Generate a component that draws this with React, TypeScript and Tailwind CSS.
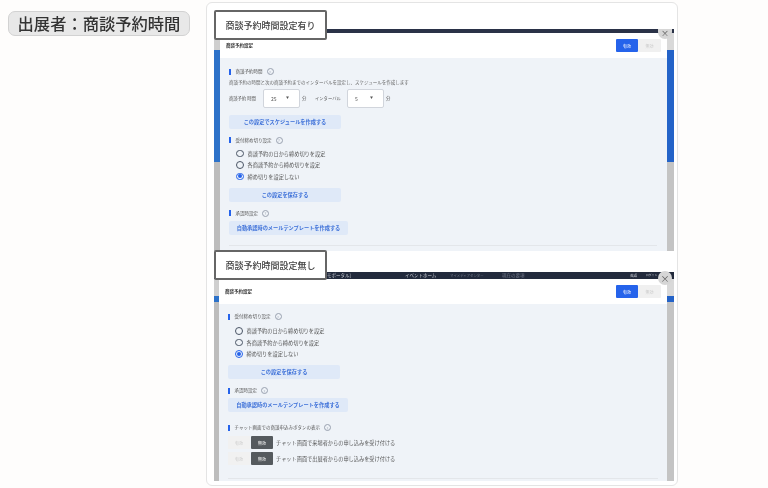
const jp = { fontFamily: '"Noto Sans CJK JP", "Noto Sans", sans-serif' };

function Help() {
  return (
    <span className="ml-[4px] flex h-[7px] w-[7px] items-center justify-center rounded-full border-[0.7px] border-gray-400 text-[4px] leading-none text-gray-400">?</span>
  );
}

function Section({ title, mt = '' }: { title: string; mt?: string }) {
  return (
    <div className={`flex h-[7px] items-center ${mt}`}>
      <span className="h-[6px] w-[1.5px] bg-[#2563eb]" />
      <span className="ml-[5px] text-[4.5px] leading-none text-[#555]">{title}</span>
      <Help />
    </div>
  );
}

function Radio({ label, on = false }: { label: string; on?: boolean }) {
  return (
    <div className="flex h-[11.5px] items-center pl-[7px]">
      <span className={`flex h-[7.5px] w-[7.5px] items-center justify-center rounded-full border-[0.8px] ${on ? 'border-[#2563eb]' : 'border-gray-600'}`}>
        {on && <span className="h-[4px] w-[4px] rounded-full bg-[#2563eb]" />}
      </span>
      <span className="ml-[4px] text-[5.2px] leading-none text-[#555]">{label}</span>
    </div>
  );
}

function SoftButton({ label, width, mt }: { label: string; width: string; mt: string }) {
  return (
    <div className={`flex h-[13.5px] items-center justify-center rounded-[2px] bg-[#dfe9f8] text-[5.2px] font-bold leading-none text-[#3b6fd8] ${width} ${mt}`}>
      {label}
    </div>
  );
}

function Select({ value }: { value: string }) {
  return (
    <div className="flex h-[19px] w-[37px] items-center justify-between rounded-[2px] border-[0.7px] border-gray-300 bg-white pl-[7px] pr-[10px] text-[5px] leading-none text-[#555]">
      <span>{value}</span>
      <span className="text-[3px]">▼</span>
    </div>
  );
}

function ModalHeader() {
  return (
    <div className="flex h-[25px] items-center justify-between bg-white px-[6px] shadow-[0_0.5px_1px_rgba(0,0,0,0.08)]">
      <span className="text-[4.5px] font-bold leading-none text-[#333]">商談予約設定</span>
      <div className="flex h-[13px]">
        <span className="flex w-[22px] items-center justify-center rounded-[1px] bg-[#2563eb] text-[4px] leading-none text-white">有効</span>
        <span className="flex w-[23px] items-center justify-center rounded-[1px] bg-[#f0f0f0] text-[4px] leading-none text-[#ccc]">無効</span>
      </div>
    </div>
  );
}

function ChatRow({ label, mt }: { label: string; mt: string }) {
  return (
    <div className={`flex h-[13px] items-center ${mt}`}>
      <span className="flex h-full w-[22px] items-center justify-center bg-[#f1f1f1] text-[4px] text-[#ccc]">有効</span>
      <span className="ml-px flex h-full w-[22px] items-center justify-center rounded-[1px] bg-[#555a5e] text-[4px] text-white">無効</span>
      <span className="ml-[3px] text-[5.2px] leading-none text-[#555]">{label}</span>
    </div>
  );
}

function Label({ text, top }: { text: string; top: string }) {
  return (
    <div className={`absolute left-[7px] flex h-[30px] w-[113px] items-center justify-center rounded-[2px] border-[2px] border-[#666] bg-white text-[9px] font-medium leading-none text-[#444] ${top}`}>
      {text}
    </div>
  );
}

function WithSettings() {
  return (
    <div className="flex h-[222px] flex-col">
      <div className="h-[4px] bg-[#2a3247]" />
      <div className="relative flex min-h-0 flex-1">
        <div className="flex w-[6px] flex-col">
          <div className="h-[17px] bg-[#cfcfcf]" />
          <div className="h-[112px] bg-[#2d72c9]" />
          <div className="flex-1 bg-[#bdbdbd]" />
        </div>
        <div className="min-w-0 flex-1">
          <ModalHeader />
          <div className="h-[193px] bg-[#eff3f8] px-[9px] pt-[10px]">
            <Section title="商談予約時間" />
            <p className="mt-[3.5px] text-[4.5px] leading-[7px] text-[#666]">商談予約の時間と次の商談予約までのインターバルを設定し、スケジュールを作成します</p>
            <div className="mt-[3.5px] flex items-center text-[4.3px] leading-none text-[#555]">
              <span className="w-[34px]">商談予約 時間</span>
              <Select value="25" />
              <span className="ml-[2px] w-[13px]">分</span>
              <span className="w-[32px]">インターバル</span>
              <Select value="5" />
              <span className="ml-[2px]">分</span>
            </div>
            <SoftButton label="この設定でスケジュールを作成する" width="w-[112px]" mt="mt-[7px]" />
            <Section title="受付締め切り設定" mt="mt-[8px]" />
            <div className="mt-[4px]">
              <Radio label="商談予約の日から締め切りを設定" />
              <Radio label="各商談予約から締め切りを設定" />
              <Radio label="締め切りを設定しない" on />
            </div>
            <SoftButton label="この設定を保存する" width="w-[112px]" mt="mt-[6px]" />
            <Section title="承認時設定" mt="mt-[8px]" />
            <SoftButton label="自動承認時のメールテンプレートを作成する" width="w-[119px]" mt="mt-[4.5px]" />
            <div className="mt-[10.5px] mr-[1px] h-px bg-[#e3e6ea]" />
          </div>
        </div>
        <div className="flex w-[7px] flex-col">
          <div className="h-[17px] bg-[#d9d9d9]" />
          <div className="h-[112px] bg-[#2463c8]" />
          <div className="flex-1 bg-[#c4c4c4]" />
        </div>
        <span className="absolute right-[2px] top-[-4px] flex h-[10px] w-[14px] items-center justify-center rounded-b-full bg-[#d6d6d6] pb-[2px] text-[8px] leading-none text-[#555]">×</span>
      </div>
    </div>
  );
}

function WithoutSettings() {
  return (
    <div className="flex h-[209px] flex-col">
      <div className="flex h-[7px] items-center bg-[#222a3c] text-[4.5px] leading-none text-[#c9ccd4]">
        <span className="ml-[113px] w-[78px]">モポータル]</span>
        <span className="w-[45px]">イベントホーム</span>
        <span className="w-[52px] text-[3.4px] text-[#6f7686]">マイメディアセンター</span>
        <span className="w-[128px] text-[#6f7686]">現在の要項</span>
        <span className="w-[16px] text-[3.6px]">英語</span>
        <span className="text-[2.8px]">ログイン</span>
      </div>
      <div className="relative flex min-h-0 flex-1">
        <div className="flex w-[5px] flex-col">
          <div className="h-[17px] bg-[#cfcfcf]" />
          <div className="h-[6px] bg-[#2d72c9]" />
          <div className="flex-1 bg-[#bdbdbd]" />
        </div>
        <div className="min-w-0 flex-1">
          <ModalHeader />
          <div className="h-[177px] bg-[#eff3f8] px-[9px] pt-[9px]">
            <Section title="受付締め切り設定" />
            <div className="mt-[5px]">
              <Radio label="商談予約の日から締め切りを設定" />
              <Radio label="各商談予約から締め切りを設定" />
              <Radio label="締め切りを設定しない" on />
            </div>
            <SoftButton label="この設定を保存する" width="w-[112px]" mt="mt-[5.5px]" />
            <Section title="承認時設定" mt="mt-[8.5px]" />
            <SoftButton label="自動承認時のメールテンプレートを作成する" width="w-[120px]" mt="mt-[4px]" />
            <Section title="チャット画面での商談申込みボタンの表示" mt="mt-[12.5px]" />
            <ChatRow label="チャット画面で来場者からの申し込みを受け付ける" mt="mt-[5px]" />
            <ChatRow label="チャット画面で出展者からの申し込みを受け付ける" mt="mt-[3px]" />
            <div className="mt-[13px] h-px bg-[#e3e6ea]" />
          </div>
        </div>
        <div className="flex w-[7px] flex-col">
          <div className="h-[17px] bg-[#d9d9d9]" />
          <div className="h-[6px] bg-[#2463c8]" />
          <div className="flex-1 bg-[#c4c4c4]" />
        </div>
        <span className="absolute right-[2px] top-[-8px] flex h-[14px] w-[14px] items-center justify-center rounded-full bg-[#d6d6d6] text-[9px] leading-none text-[#555]">×</span>
      </div>
    </div>
  );
}

export default function App() {
  return (
    <div className="flex h-[488px] w-[768px] items-start overflow-hidden bg-[#fefdfc] blur-[0.4px]" style={jp}>
      <div className="ml-[8px] mt-[11px] flex h-[25px] w-[182px] items-center justify-center rounded-[7px] border border-[#d2d2d2] bg-[#e8e8e8] text-[16.3px] font-medium leading-none text-[#333]">
        出展者：商談予約時間
      </div>
      <div className="relative ml-[16px] mt-[2px] h-[484px] w-[472px] rounded-[6px] border border-[#e4e4e4] bg-white pl-[7px] pr-[3px] pt-[26px]">
        <WithSettings />
        <div className="h-[21px]" />
        <WithoutSettings />
        <Label text="商談予約時間設定有り" top="top-[7px]" />
        <Label text="商談予約時間設定無し" top="top-[247px]" />
      </div>
    </div>
  );
}
